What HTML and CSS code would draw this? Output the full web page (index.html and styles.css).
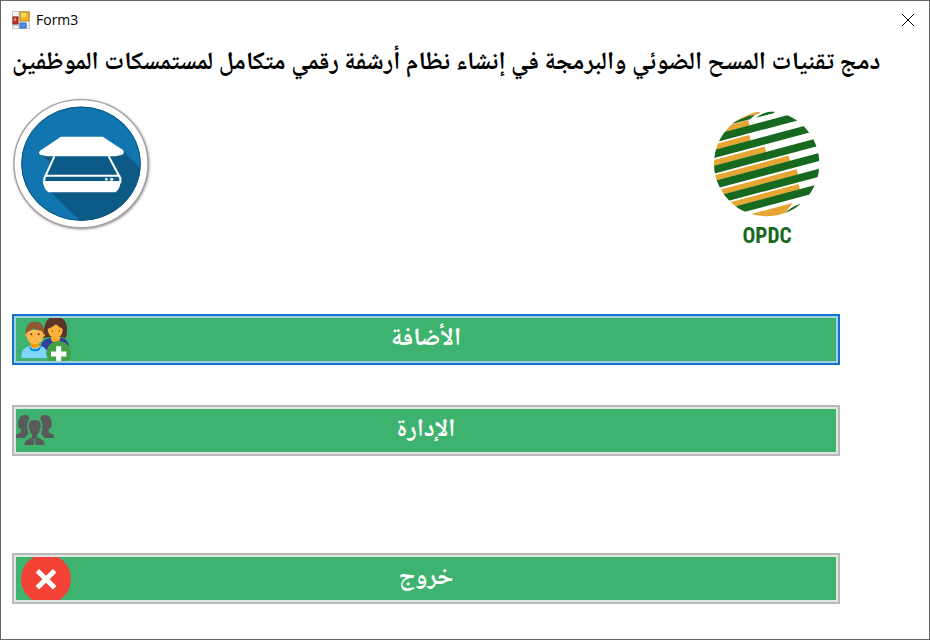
FILE: index.html
```html
<!DOCTYPE html>
<html lang="ar">
<head>
<meta charset="utf-8">
<title>Form3</title>
<link rel="stylesheet" href="styles.css">
</head>
<body>
<div class="window">
  <header class="titlebar">
    <svg class="app-icon" viewBox="0 0 18 18" aria-hidden="true">
      <rect x="0.5" y="0.5" width="17" height="17" fill="#f4f4f6" stroke="#c9c9d0"/>
      <path d="M7 0v18M0 5.500h7M0 14.500h18M14 12v6" stroke="#c9c9d0" fill="none"/>
      <rect x="8" y="1" width="9" height="9" fill="#f2b824" stroke="#b98a1c"/>
      <rect x="9" y="2" width="5" height="4" fill="#fbd96a"/>
      <rect x="1" y="6" width="5" height="7" fill="#c8322b" stroke="#94231f"/>
      <rect x="2" y="7" width="2" height="3" fill="#ea8079"/>
      <rect x="8" y="12" width="6" height="5" fill="#4f8be8" stroke="#3569c4"/>
    </svg>
    <span class="caption">Form3</span>
    <button class="close" type="button" aria-label="Close">
      <svg viewBox="0 0 14 14" aria-hidden="true"><path d="M1 1l12 12M13 1L1 13" stroke="#000" fill="none"/></svg>
    </button>
  </header>
  <main class="content">
    <h1 class="heading" dir="rtl">دمج تقنيات المسح الضوئي والبرمجة في إنشاء نظام أرشفة رقمي متكامل لمستمسكات الموظفين</h1>
    <div class="logos">
      <svg class="scanner" viewBox="0 0 420 420" aria-hidden="true">
        <defs>
          <clipPath id="disc"><ellipse cx="207" cy="200" rx="179" ry="171"/></clipPath>
          <filter id="soft" x="-10%" y="-10%" width="120%" height="120%"><feGaussianBlur stdDeviation="4"/></filter>
        </defs>
        <ellipse cx="209" cy="203" rx="202" ry="193" fill="#777" filter="url(#soft)"/>
        <ellipse cx="207" cy="200" rx="201" ry="192" fill="#fff" stroke="#a2a2a2" stroke-width="4"/>
        <ellipse cx="207" cy="200" rx="179" ry="171" fill="#1176b0"/>
        <path clip-path="url(#disc)" fill="#0d5a86" d="M83 170L337 165 420 250V420H255L95 265 120 200z"/>
        <ellipse cx="207" cy="200" rx="178" ry="170" fill="none" stroke="#0c5682" stroke-width="3"/>
        <path fill="#fff" d="M147 119H272L334 160Q338 172 328 174L310 178H104L88 174Q78 172 83 162z"/>
        <path d="M127 178L97 244M290 178L325 244M97 236H325M97 240V256H325V240" fill="none" stroke="#fff" stroke-width="6"/>
        <path fill="#fff" d="M92 253H326Q324 276 311 286H110Q97 280 92 253z"/>
        <circle cx="283" cy="247" r="4" fill="#fff"/><circle cx="299" cy="247" r="5" fill="#fff"/>
      </svg>
      <svg class="opdc" viewBox="0 0 420 510" role="img" aria-label="OPDC">
        <defs><clipPath id="globe"><circle cx="200" cy="221" r="158"/></clipPath></defs>
        <g clip-path="url(#globe)" fill="none">
          <path stroke="#e5a634" stroke-width="17" d="M20 132L147 98M20 178L150 143M20 225L196 178M20 271L268 205M20 318L292 246M20 364L298 290"/>
          <path fill="#e5a634" d="M192 183L180 176 200 183zM80 392L277 339Q262 365 235 390zM80 105L175 60 180 70Q160 76 145 83L95 97z"/>
          <path stroke="#17691f" stroke-width="23" d="M20 152L380 56M20 198L380 102M20 245L380 149M20 291L380 195M20 338L380 242M20 384L380 288"/>
          <path fill="#17691f" d="M90 101L145 78 165 75 150 88 80 106zM168 84Q185 66 225 64L222 70Q195 76 168 84zM250 374Q272 350 302 341L290 356z"/>
          <path fill="#fff" d="M148 96Q158 78 176 72L170 84 225 69 250 73 165 96 150 106z"/>
        </g>
        <text class="opdc-text" x="201" y="458" text-anchor="middle">OPDC</text>
      </svg>
    </div>
    <nav class="actions">
      <button class="action focused" type="button">
        <svg class="icon" viewBox="48 39 180 129" aria-hidden="true">
          <path fill="#303f9f" d="M122 125Q125 104 149 99H185Q207 104 208 130V145H130z"/>
          <path fill="#ffa726" d="M153 90H180V105Q166 122 153 105z"/>
          <path fill="#5d3428" d="M131 99Q129 39 160 35Q199 32 201 70Q202 88 197 100L181 96H150z"/>
          <path fill="#ffb13c" d="M143 72Q158 67 168 58Q178 68 188 72Q188 94 173 98H160Q145 94 143 72z"/>
          <circle cx="157" cy="78" r="2" fill="#6b3b24"/><circle cx="178" cy="78" r="2" fill="#6b3b24"/>
          <path fill="#81d4fa" d="M64 159Q63 127 90 122H120Q144 126 145 159z"/>
          <path fill="#0288d1" d="M87 122Q105 144 124 122L119 135Q105 143 91 135z"/>
          <path fill="#ff9800" d="M92 110H117V124Q105 136 92 124z"/>
          <path fill="#ffb74d" d="M81 75H129V95Q128 117 105 118Q82 117 81 95z"/>
          <circle cx="79" cy="91" r="4" fill="#ffa726"/><circle cx="131" cy="91" r="4" fill="#ffa726"/>
          <path fill="#8d5a35" d="M78 88Q75 50 105 50Q135 50 132 88L125 78Q110 77 101 70Q96 76 84 80z"/>
          <circle cx="94" cy="88" r="3" fill="#5d3428"/><circle cx="116" cy="88" r="3" fill="#5d3428"/>
          <circle cx="176" cy="145" r="37" fill="#43a047"/>
          <path d="M176 124V170M153 147H199" stroke="#fff" stroke-width="15"/>
        </svg>
        <span dir="rtl">الأضافة</span>
      </button>
      <button class="action" type="button">
        <svg class="icon" viewBox="48 42 180 129" aria-hidden="true">
          <g fill="#5a5a5a">
            <path d="M48 129V119L63 112V102Q53 100 54 86Q54 60 74 60Q88 60 88 72Q80 84 82 102L86 116Q79 122 76 129z"/>
            <path d="M161 129V119L146 112V102Q156 100 155 86Q155 60 135 60Q121 60 121 72Q129 84 127 102L123 116Q130 122 133 129z"/>
            <path d="M74 150Q74 138 81 135L96 127V119Q89 112 88 102Q84 98 86 91Q86 75 104 75Q122 75 122 91Q124 98 120 102Q119 112 112 119V127L127 135Q134 138 134 150H107L104 136 101 150z"/>
          </g>
          <path d="M99 132L104 137 109 132" fill="none" stroke="#3eb370" stroke-width="3"/>
        </svg>
        <span dir="rtl">الإدارة</span>
      </button>
      <button class="action exit" type="button">
        <svg class="icon" viewBox="48 36 180 129" aria-hidden="true">
          <circle cx="138" cy="102" r="75" fill="#f44336"/>
          <path d="M112 77L164 128M164 77L112 128" stroke="#fff" stroke-width="15"/>
        </svg>
        <span dir="rtl">خروج</span>
      </button>
    </nav>
  </main>
</div>
</body>
</html>
```
FILE: styles.css
```css
* { box-sizing: border-box; }
body { margin: 0; background: #fff; font-family: "Open Sans", sans-serif; }
.window { min-height: 100vh; border: 1px solid #666; }
.titlebar { display: flex; align-items: center; gap: 6px; height: 37px; padding: 0 14px 0 11px; font-size: 14px; }
.app-icon { width: 18px; height: 18px; }
.close { margin-left: auto; padding: 0; border: 0; background: none; line-height: 0; }
.close svg { width: 14px; height: 14px; }
.content { padding: 0 89px 0 11px; }
.heading { margin: 0; font: bold 25px/52px "Noto Naskh Arabic", "Open Sans", sans-serif; white-space: nowrap; width: max-content; }
.logos { display: flex; justify-content: space-between; height: 224px; }
.scanner { width: 140px; height: 140px; margin-top: 7px; }
.opdc { width: 140px; height: 170px; }
.opdc-text { font: bold 64px "Liberation Sans Narrow", "Roboto Condensed", Roboto, sans-serif; fill: #17691f; }
.actions { display: flex; flex-direction: column; gap: 40px; }
.action {
  display: grid;
  grid-template-columns: 60px 1fr 60px;
  align-items: center;
  height: 51px;
  padding: 0;
  border: 2px solid #b9b9b9;
  box-shadow: inset 0 0 0 2px #dce8df;
  background: #3eb370;
  color: #fff;
  font: bold 25px/40px "Noto Naskh Arabic", "Open Sans", sans-serif;
}
.icon { display: block; width: 60px; height: 43px; margin-left: 2px; }
.focused { border-color: #0f73cf; box-shadow: inset 0 0 0 2px #a0cfdf; }
.exit { margin-top: 57px; }
```
